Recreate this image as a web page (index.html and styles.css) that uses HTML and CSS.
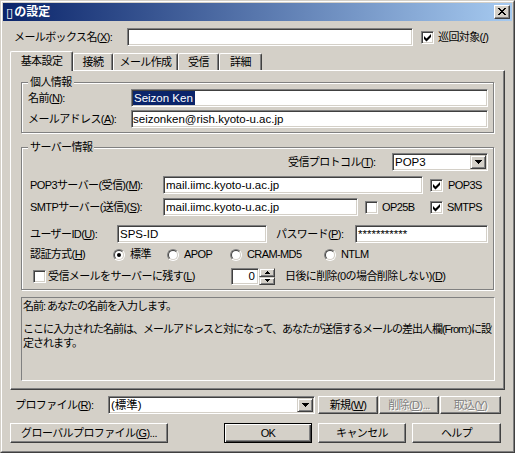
FILE: index.html
```html
<!DOCTYPE html>
<html lang="ja">
<head>
<meta charset="utf-8">
<title>の設定</title>
<link rel="stylesheet" href="styles.css">
</head>
<body>
<div class="window">
<div class="frame">
  <div class="titlebar">
    <span class="title"><span class="tofu">▯</span>の設定</span>
    <span class="capbtn"><svg width="8" height="7" viewBox="0 0 8 7"><path d="M0 0h2v1H0zM6 0h2v1H6zM1 1h2v1H1zM5 1h2v1H5zM2 2h4v1H2zM3 3h2v1H3zM2 4h4v1H2zM1 5h2v1H1zM5 5h2v1H5zM0 6h2v1H0zM6 6h2v1H6z"/></svg></span>
  </div>
  <div class="body">
    <div class="mbox-row">
      <span class="lbl mbox-lbl">メールボックス名(<u>X</u>):</span>
      <div class="edit mbox-edit"></div>
      <span class="chk"><svg width="11" height="11" viewBox="1 1 11 11"><path d="M3 5L5.5 7.5L10 3V6L5.5 10.5L3 8Z"/></svg></span>
      <span class="chk-lbl">巡回対象(<u>/</u>)</span>
    </div>

    <div class="tabs">
      <div class="tab sel t1">基本設定</div>
      <div class="tab t2">接続</div>
      <div class="tab t3">メール作成</div>
      <div class="tab t4">受信</div>
      <div class="tab t5">詳細</div>
    </div>

    <div class="panel">
      <div class="group g1">
        <div class="gtitle">個人情報</div>
        <div class="frow">
          <span class="lbl g1-lbl">名前(<u>N</u>):</span>
          <div class="edit g1-edit"><span class="hl">Seizon Ken</span></div>
        </div>
        <div class="frow r-addr">
          <span class="lbl g1-lbl">メールアドレス(<u>A</u>):</span>
          <div class="edit g1-edit">seizonken@rish.kyoto-u.ac.jp</div>
        </div>
      </div>

      <div class="group g2">
        <div class="gtitle">サーバー情報</div>
        <div class="frow r-proto">
          <span class="lbl proto-lbl">受信プロトコル(<u>T</u>):</span>
          <div class="edit combo proto"><span class="ctext">POP3</span><span class="dd"><svg width="7" height="4" viewBox="0 0 7 4"><path d="M0 0h7v1H0zM1 1h5v1H1zM2 2h3v1H2zM3 3h1v1H3z"/></svg></span></div>
        </div>
        <div class="frow r-pop">
          <span class="lbl srv-lbl">POP3サーバー(受信)(<u>M</u>):</span>
          <div class="edit pop-edit">mail.iimc.kyoto-u.ac.jp</div>
          <span class="chk c-pop3s"><svg width="11" height="11" viewBox="1 1 11 11"><path d="M3 5L5.5 7.5L10 3V6L5.5 10.5L3 8Z"/></svg></span>
          <span class="chk-lbl">POP3S</span>
        </div>
        <div class="frow r-smtp">
          <span class="lbl srv-lbl">SMTPサーバー(送信)(<u>S</u>):</span>
          <div class="edit smtp-edit">mail.iimc.kyoto-u.ac.jp</div>
          <span class="chk c-op25"></span>
          <span class="chk-lbl op25">OP25B</span>
          <span class="chk"><svg width="11" height="11" viewBox="1 1 11 11"><path d="M3 5L5.5 7.5L10 3V6L5.5 10.5L3 8Z"/></svg></span>
          <span class="chk-lbl">SMTPS</span>
        </div>
        <div class="frow r-user">
          <span class="lbl user-lbl">ユーザーID(<u>U</u>):</span>
          <div class="edit user-edit">SPS-ID</div>
          <span class="lbl pass-lbl">パスワード(<u>P</u>):</span>
          <div class="edit pass-edit">***********</div>
        </div>
        <div class="frow r-auth">
          <span class="lbl auth-lbl">認証方式(<u>H</u>)</span>
          <span class="opt o1"><span class="radio on"><i></i></span>標準</span>
          <span class="opt o2"><span class="radio"><i></i></span>APOP</span>
          <span class="opt o3"><span class="radio"><i></i></span>CRAM-MD5</span>
          <span class="opt o4"><span class="radio"><i></i></span>NTLM</span>
        </div>
        <div class="frow r-keep">
          <span class="chk c-keep"></span>
          <span class="keep-lbl">受信メールをサーバーに残す(<u>L</u>)</span>
          <div class="edit spin-edit">0</div>
          <div class="spin">
            <span class="sb"><svg width="5" height="3" viewBox="0 0 5 3"><path d="M2 0h1v1H2zM1 1h3v1H1zM0 2h5v1H0z"/></svg></span>
            <span class="sb"><svg width="5" height="3" viewBox="0 0 5 3"><path d="M0 0h5v1H0zM1 1h3v1H1zM2 2h1v1H2z"/></svg></span>
          </div>
          <span class="days">日後に削除(0の場合削除しない)(<u>D</u>)</span>
        </div>
      </div>

      <div class="desc">
        <p>名前: あなたの名前を入力します。</p>
        <p>ここに入力された名前は、メールアドレスと対になって、あなたが送信するメールの差出人欄(From:)に設<br>定されます。</p>
      </div>
    </div>

    <div class="prow">
      <span class="lbl prof-lbl">プロファイル(<u>R</u>):</span>
      <div class="edit combo prof-combo"><span class="ctext">(標準)</span><span class="dd"><svg width="7" height="4" viewBox="0 0 7 4"><path d="M0 0h7v1H0zM1 1h5v1H1zM2 2h3v1H2zM3 3h1v1H3z"/></svg></span></div>
      <div class="btn b-new">新規(<u>W</u>)</div>
      <div class="btn dis b-del">削除(<u>D</u>)...</div>
      <div class="btn dis b-imp">取込(<u>Y</u>)</div>
    </div>

    <div class="brow">
      <div class="btn b-glob">グローバルプロファイル(<u>G</u>)...</div>
      <div class="btn def b-ok">OK</div>
      <div class="btn b-cancel">キャンセル</div>
      <div class="btn b-help">ヘルプ</div>
    </div>
  </div>
</div>
</div>
</body>
</html>
```

FILE: styles.css
```css
* { box-sizing: border-box; }
html, body { margin: 0; padding: 0; background: #d4d0c8; }
body {
  font-family: "Liberation Sans", "Noto Sans CJK JP", sans-serif;
  font-size: 11px;
  line-height: 13px;
  letter-spacing: -0.6px;
  color: #000;
}
u { text-decoration: underline; text-underline-offset: 1px; }
svg { display: block; }

.window {
  width: 515px; height: 453px;
  border: 1px solid; border-color: #d4d0c8 #404040 #404040 #d4d0c8;
  background: #d4d0c8;
}
.frame {
  height: 100%;
  border: 1px solid; border-color: #fff #808080 #808080 #fff;
  padding: 1px;
  display: flex; flex-direction: column;
}

/* title bar */
.titlebar {
  flex: none;
  height: 18px;
  background: linear-gradient(to right, #0a246a, #a6caf0);
  display: flex; align-items: center; justify-content: space-between;
  padding: 0 2px 0 3px;
  color: #fff; font-weight: bold; font-size: 12px; letter-spacing: 0;
}
.title { display: flex; align-items: center; }
.tofu { font-family: "DejaVu Sans", sans-serif; font-weight: bold; font-size: 13px; margin-right: 1px; }
.capbtn {
  width: 16px; height: 14px;
  background: #d4d0c8;
  border: 1px solid; border-color: #fff #404040 #404040 #fff;
  box-shadow: inset -1px -1px 0 #808080;
  display: flex; align-items: center; justify-content: center;
  padding: 0 1px 1px 0;
}
.capbtn svg { fill: #000; }

.body { flex: 1; padding: 0 7px; display: flex; flex-direction: column; }

/* generic controls */
.lbl { flex: none; white-space: nowrap; }
.edit {
  flex: none;
  height: 18px;
  background: #fff;
  border: 1px solid; border-color: #808080 #fff #fff #808080;
  box-shadow: inset 1px 1px 0 #404040, inset -1px -1px 0 #d4d0c8;
  padding: 0 2px;
  display: flex; align-items: center;
  white-space: nowrap; overflow: hidden;
  font-size: 11.5px; letter-spacing: 0;
}
.hl { background: #0a246a; color: #fff; padding: 0 2px 0 1px; line-height: 14px; }
.chk {
  flex: none;
  width: 13px; height: 13px;
  background: #fff;
  border: 1px solid; border-color: #808080 #fff #fff #808080;
  box-shadow: inset 1px 1px 0 #404040, inset -1px -1px 0 #d4d0c8;
}
.chk svg { fill: #000; }
.chk-lbl { flex: none; white-space: nowrap; }
.radio {
  flex: none;
  width: 12px; height: 12px; border-radius: 50%;
  border: 1px solid; border-color: #808080 #fff #fff #808080;
}
.radio > i {
  width: 10px; height: 10px; border-radius: 50%;
  border: 1px solid; border-color: #404040 #d4d0c8 #d4d0c8 #404040;
  background: #fff;
  display: flex; align-items: center; justify-content: center;
}
.radio.on > i::after {
  content: ""; width: 4px; height: 4px; border-radius: 50%; background: #000;
}
.combo { padding: 0 1px 0 2px; justify-content: space-between; }
.dd {
  width: 16px; height: 14px;
  background: #d4d0c8;
  border: 1px solid; border-color: #d4d0c8 #404040 #404040 #d4d0c8;
  box-shadow: inset 1px 1px 0 #fff, inset -1px -1px 0 #808080;
  display: flex; align-items: center; justify-content: center;
}
.dd svg { fill: #000; }
.btn {
  flex: none;
  background: #d4d0c8;
  border: 1px solid; border-color: #fff #404040 #404040 #fff;
  box-shadow: inset -1px -1px 0 #808080;
  display: flex; align-items: center; justify-content: center;
  white-space: nowrap;
}
.btn.def {
  border: 1px solid #000;
  box-shadow: inset 1px 1px 0 #fff, inset -1px -1px 0 #404040, inset -2px -2px 0 #808080;
}
.btn.dis { color: #808080; text-shadow: 1px 1px 0 #fff; }

/* row 1 */
.mbox-row { flex: none; margin-top: 7px; height: 18px; padding-left: 4px; display: flex; align-items: center; }
.mbox-lbl { width: 113px; }
.mbox-edit { width: 286px; }
.mbox-row .chk { margin-left: 8px; }
.mbox-row .chk-lbl { margin-left: 4px; }

/* tabs */
.tabs {
  flex: none;
  margin-top: 5px; height: 19px;
  display: flex; align-items: flex-end;
  position: relative; z-index: 1;
}
.tab {
  height: 17px;
  background: #d4d0c8;
  border-top: 1px solid #fff; border-left: 1px solid #fff; border-right: 1px solid #404040;
  box-shadow: inset -1px 0 0 #808080;
  border-radius: 2px 2px 0 0;
  display: flex; align-items: center; justify-content: center;
  padding-top: 1px;
}
.tab.sel { height: 20px; margin-bottom: -1px; padding-bottom: 2px; }
.t1 { width: 63px; }
.t2 { width: 40px; }
.t3 { width: 65px; }
.t4 { width: 41px; }
.t5 { width: 43px; }

/* panel */
.panel {
  flex: none;
  height: 320px;
  border-top: 1px solid #fff; border-left: 1px solid #fff;
  border-right: 1px solid #404040; border-bottom: 1px solid #404040;
  box-shadow: inset -1px -1px 0 #808080;
  padding-left: 10px;
  display: flex; flex-direction: column;
}
.group {
  flex: none;
  width: 473px;
  border: 1px solid #808080;
  box-shadow: 1px 1px 0 #fff, inset 1px 1px 0 #fff;
  padding-right: 5px;
}
.gtitle {
  width: fit-content;
  height: 13px;
  margin-top: -7px;
  padding: 0 2px;
  background: #d4d0c8;
}
.frow { height: 18px; display: flex; align-items: center; }

.g1 { margin-top: 11px; height: 51px; padding-left: 6px; }
.g1-lbl { width: 103px; }
.g1-edit { flex: 1; padding-left: 1px; }
.r-addr { margin-top: 3px; }

.g2 { margin-top: 14px; height: 143px; padding-left: 8px; }
.g2 .gtitle { margin-left: -2px; }
.r-proto { margin-top: -1px; justify-content: flex-end; }
.proto-lbl { width: 104px; }
.proto { width: 96px; }
.r-pop { margin-top: 5px; }
.srv-lbl { width: 133px; }
.pop-edit { width: 260px; }
.r-pop .chk { margin-left: 7px; }
.r-pop .chk-lbl { margin-left: 5px; }
.r-smtp { margin-top: 4px; }
.smtp-edit { width: 195px; }
.c-op25 { margin-left: 7px; }
.op25 { margin-left: 4px; width: 48px; }
.r-smtp .chk-lbl:last-child { margin-left: 4px; }
.r-user { margin-top: 9px; }
.user-lbl { width: 87px; }
.user-edit { width: 150px; }
.pass-lbl { margin-left: 9px; width: 79px; }
.pass-edit { flex: 1; }
.r-auth { margin-top: 4px; height: 15px; }
.auth-lbl { width: 83px; }
.opt { flex: none; display: flex; align-items: center; gap: 5px; white-space: nowrap; }
.o1 { width: 54px; }
.o2 { width: 63px; }
.o3 { width: 94px; }
.r-keep { margin-top: 6px; height: 17px; }
.c-keep { margin-left: 3px; }
.keep-lbl { margin-left: 2px; width: 183px; white-space: nowrap; }
.spin-edit { width: 28px; height: 17px; justify-content: flex-end; padding-right: 3px; }
.spin { flex: none; width: 16px; height: 17px; display: flex; flex-direction: column; }
.sb {
  flex: 1;
  background: #d4d0c8;
  border: 1px solid; border-color: #d4d0c8 #404040 #404040 #d4d0c8;
  box-shadow: inset 1px 1px 0 #fff, inset -1px -1px 0 #808080;
  display: flex; align-items: center; justify-content: center;
}
.sb svg { fill: #000; }
.days { margin-left: 10px; white-space: nowrap; }

/* description */
.desc {
  flex: none;
  margin-top: 7px;
  width: 474px; height: 84px;
  border: 1px solid; border-color: #808080 #fff #fff #808080;
  padding: 1px 0 0 1px;
  line-height: 14px;
  letter-spacing: -1px;
  white-space: nowrap; overflow: hidden;
}
.desc p { margin: 0; }
.desc p + p { margin-top: 9px; }

/* bottom rows */
.prow { flex: none; margin-top: 6px; height: 18px; display: flex; align-items: center; }
.prof-lbl { margin-left: 5px; width: 93px; }
.prof-combo { width: 207px; }
.prow .btn { height: 18px; }
.b-new { margin-left: 3px; width: 60px; }
.b-del { margin-left: 1px; width: 60px; }
.b-imp { margin-left: 1px; width: 61px; }

.brow { flex: none; margin-top: 9px; height: 20px; display: flex; }
.b-glob { width: 158px; }
.b-ok { margin-left: 56px; width: 88px; }
.b-cancel { margin-left: 6px; width: 88px; }
.b-help { margin-left: 6px; width: 89px; }
```
